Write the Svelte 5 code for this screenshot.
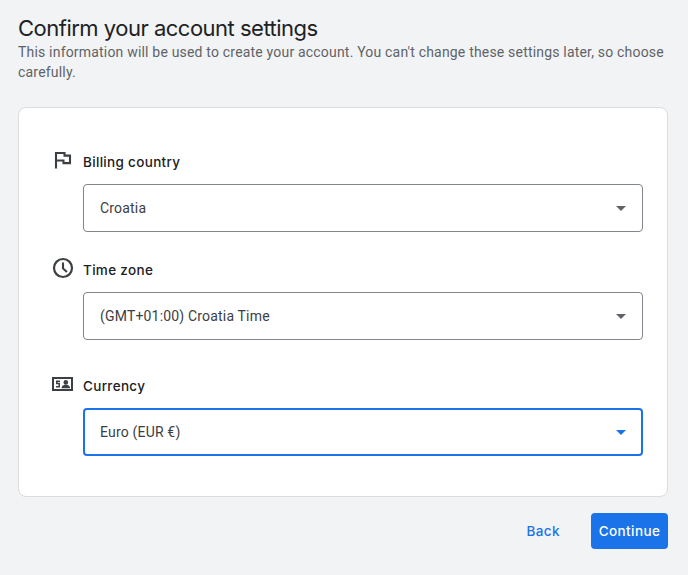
<script>
  const fields = [
    { id: 'country', label: 'Billing country', value: 'Croatia', focused: false },
    { id: 'zone', label: 'Time zone', value: '(GMT+01:00) Croatia Time', focused: false },
    { id: 'currency', label: 'Currency', value: 'Euro (EUR €)', focused: true }
  ];
</script>

<main class="page">
  <h1>Confirm your account settings</h1>
  <p class="intro">This information will be used to create your account. You can't change these settings later, so choose carefully.</p>

  <section class="card">
    {#each fields as f}
      <div class="field {f.id}">
        <div class="head">
          <span class="icon">
            {#if f.id === 'country'}
              <svg width="24" height="24" viewBox="0 0 24 24"><path fill="none" stroke="#3c4043" stroke-width="2.1" d="M5 20.5V5h8.5v2.6H19v7.5h-6.5v-2.6H5"/></svg>
            {:else if f.id === 'zone'}
              <svg width="24" height="24" viewBox="0 0 24 24"><circle cx="12" cy="12" r="9" fill="none" stroke="#3c4043" stroke-width="2.2"/><path d="M12 6.5V12.4l3.9 3.6" fill="none" stroke="#3c4043" stroke-width="2.1"/></svg>
            {:else}
              <svg width="24" height="24" viewBox="0 0 24 24"><path fill="#3c4043" fill-rule="evenodd" d="M1 5h21v14H1V5zm2 2v10h17V7H3z"/><path fill="#3c4043" d="M5 8.5h4v1.4H6.5v.9H9v4.7H5v-1.4h2.5v-1.9H5V8.5z"/><circle cx="14.8" cy="10.4" r="2.3" fill="#3c4043"/><path fill="#3c4043" d="M10.6 15.6c0-1.9 2.1-2.9 4.2-2.9s4.2 1 4.2 2.9v.6h-8.4v-.6z"/></svg>
            {/if}
          </span>
          <label for={f.id}>{f.label}</label>
        </div>
        <div class="select" class:focused={f.focused} id={f.id}>
          <span>{f.value}</span>
          <i class="arrow"></i>
        </div>
      </div>
    {/each}
  </section>

  <footer>
    <button class="back">Back</button>
    <button class="next">Continue</button>
  </footer>
</main>

<style>
  :global(body) {
    margin: 0;
    background: #f1f3f4;
  }
  .page {
    box-sizing: border-box;
    height: 575px;
    padding: 14px 20px 0 18px;
    font-family: Roboto, sans-serif;
    color: #3c4043;
    overflow: hidden;
  }
  h1 {
    margin: 0;
    font: 400 22px/28px Inter, Roboto, sans-serif;
    letter-spacing: -0.5px;
    color: #202124;
  }
  .intro {
    margin: 0 0 25px;
    font-size: 14px;
    line-height: 20px;
    letter-spacing: 0.19px;
    color: #5f6368;
  }
  .card {
    box-sizing: border-box;
    height: 390px;
    padding: 44px 24px 40px 34px;
    background: #fff;
    border: 1px solid #dadce0;
    border-radius: 8px;
  }
  .field.zone { margin-top: 28px; }
  .field.currency { margin-top: 36px; }
  .head {
    display: flex;
    align-items: flex-start;
    height: 20px;
    margin-bottom: 12px;
  }
  .icon {
    display: block;
    width: 24px;
    height: 24px;
    margin: -4px 8px 0 -2px;
  }
  .icon svg { display: block; }
  label {
    font: 500 13.5px/20px Inter, Roboto, sans-serif;
    letter-spacing: 0.32px;
    color: #202124;
  }
  .select {
    box-sizing: border-box;
    display: flex;
    align-items: center;
    justify-content: space-between;
    height: 48px;
    margin-left: 30px;
    padding: 0 16px;
    border: 1px solid #80868b;
    border-radius: 4px;
    font-size: 14px;
    letter-spacing: 0.18px;
    color: #3c4043;
  }
  .select.focused {
    border: 2px solid #1a73e8;
    padding: 0 15px;
  }
  .arrow {
    width: 0;
    height: 0;
    border-left: 5px solid transparent;
    border-right: 5px solid transparent;
    border-top: 5px solid #5f6368;
  }
  .focused .arrow { border-top-color: #1a73e8; }
  footer {
    display: flex;
    justify-content: flex-end;
    align-items: center;
    gap: 8px;
    margin-top: 16px;
  }
  button {
    height: 36px;
    border: 0;
    border-radius: 4px;
    padding: 0;
    font: 500 13.5px/36px Inter, Roboto, sans-serif;
    letter-spacing: 0.4px;
    cursor: pointer;
  }
  .back { background: transparent; color: #1a73e8; padding: 0 23px 0 25px; }
  .next { background: #1a73e8; color: #fff; width: 77px; }
</style>
